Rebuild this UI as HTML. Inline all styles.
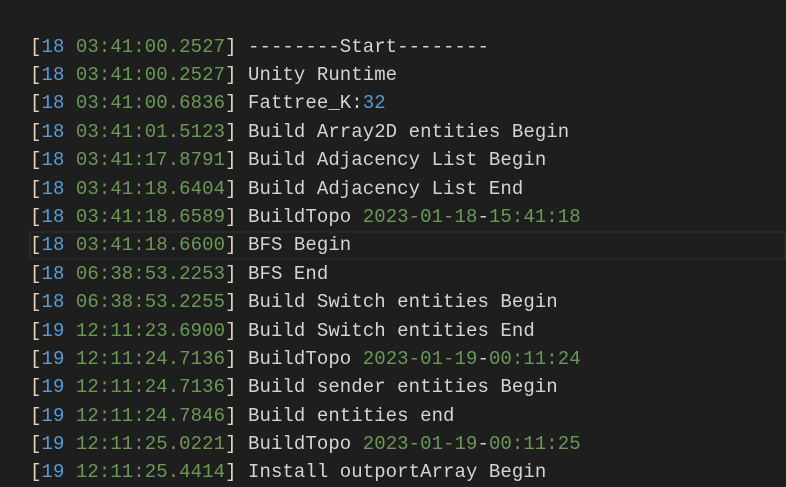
<!DOCTYPE html>
<html><head><style>
html,body{margin:0;padding:0;background:#1e1e1e;width:786px;height:482px;overflow:hidden}
.c{position:absolute;left:0;top:32.6px;width:786px}
.l{height:28.4px;line-height:28.4px;padding-left:30px;font-family:"Liberation Mono",monospace;font-size:19px;letter-spacing:0.07px;color:#d4d4d4;white-space:pre;box-sizing:border-box}
.h{outline:2px solid #282828;outline-offset:-2px;margin-left:29px;padding-left:1px;margin-top:-0.8px;height:29.2px}
.b{color:#e0d6bc}.n{color:#569cd6}.g{color:#6a9955}
</style></head><body><div class="c">
<div class="l"><span class="b">[</span><span class="n">18</span> <span class="g">03:41:00.2527</span><span class="b">]</span> --------Start--------</div>
<div class="l"><span class="b">[</span><span class="n">18</span> <span class="g">03:41:00.2527</span><span class="b">]</span> Unity Runtime</div>
<div class="l"><span class="b">[</span><span class="n">18</span> <span class="g">03:41:00.6836</span><span class="b">]</span> Fattree_K:<span class="n">32</span></div>
<div class="l"><span class="b">[</span><span class="n">18</span> <span class="g">03:41:01.5123</span><span class="b">]</span> Build Array2D entities Begin</div>
<div class="l"><span class="b">[</span><span class="n">18</span> <span class="g">03:41:17.8791</span><span class="b">]</span> Build Adjacency List Begin</div>
<div class="l"><span class="b">[</span><span class="n">18</span> <span class="g">03:41:18.6404</span><span class="b">]</span> Build Adjacency List End</div>
<div class="l"><span class="b">[</span><span class="n">18</span> <span class="g">03:41:18.6589</span><span class="b">]</span> BuildTopo <span class="g">2023-01-18</span>-<span class="g">15:41:18</span></div>
<div class="l h"><span class="b">[</span><span class="n">18</span> <span class="g">03:41:18.6600</span><span class="b">]</span> BFS Begin</div>
<div class="l"><span class="b">[</span><span class="n">18</span> <span class="g">06:38:53.2253</span><span class="b">]</span> BFS End</div>
<div class="l"><span class="b">[</span><span class="n">18</span> <span class="g">06:38:53.2255</span><span class="b">]</span> Build Switch entities Begin</div>
<div class="l"><span class="b">[</span><span class="n">19</span> <span class="g">12:11:23.6900</span><span class="b">]</span> Build Switch entities End</div>
<div class="l"><span class="b">[</span><span class="n">19</span> <span class="g">12:11:24.7136</span><span class="b">]</span> BuildTopo <span class="g">2023-01-19</span>-<span class="g">00:11:24</span></div>
<div class="l"><span class="b">[</span><span class="n">19</span> <span class="g">12:11:24.7136</span><span class="b">]</span> Build sender entities Begin</div>
<div class="l"><span class="b">[</span><span class="n">19</span> <span class="g">12:11:24.7846</span><span class="b">]</span> Build entities end</div>
<div class="l"><span class="b">[</span><span class="n">19</span> <span class="g">12:11:25.0221</span><span class="b">]</span> BuildTopo <span class="g">2023-01-19</span>-<span class="g">00:11:25</span></div>
<div class="l"><span class="b">[</span><span class="n">19</span> <span class="g">12:11:25.4414</span><span class="b">]</span> Install outportArray Begin</div>
</div></body></html>
